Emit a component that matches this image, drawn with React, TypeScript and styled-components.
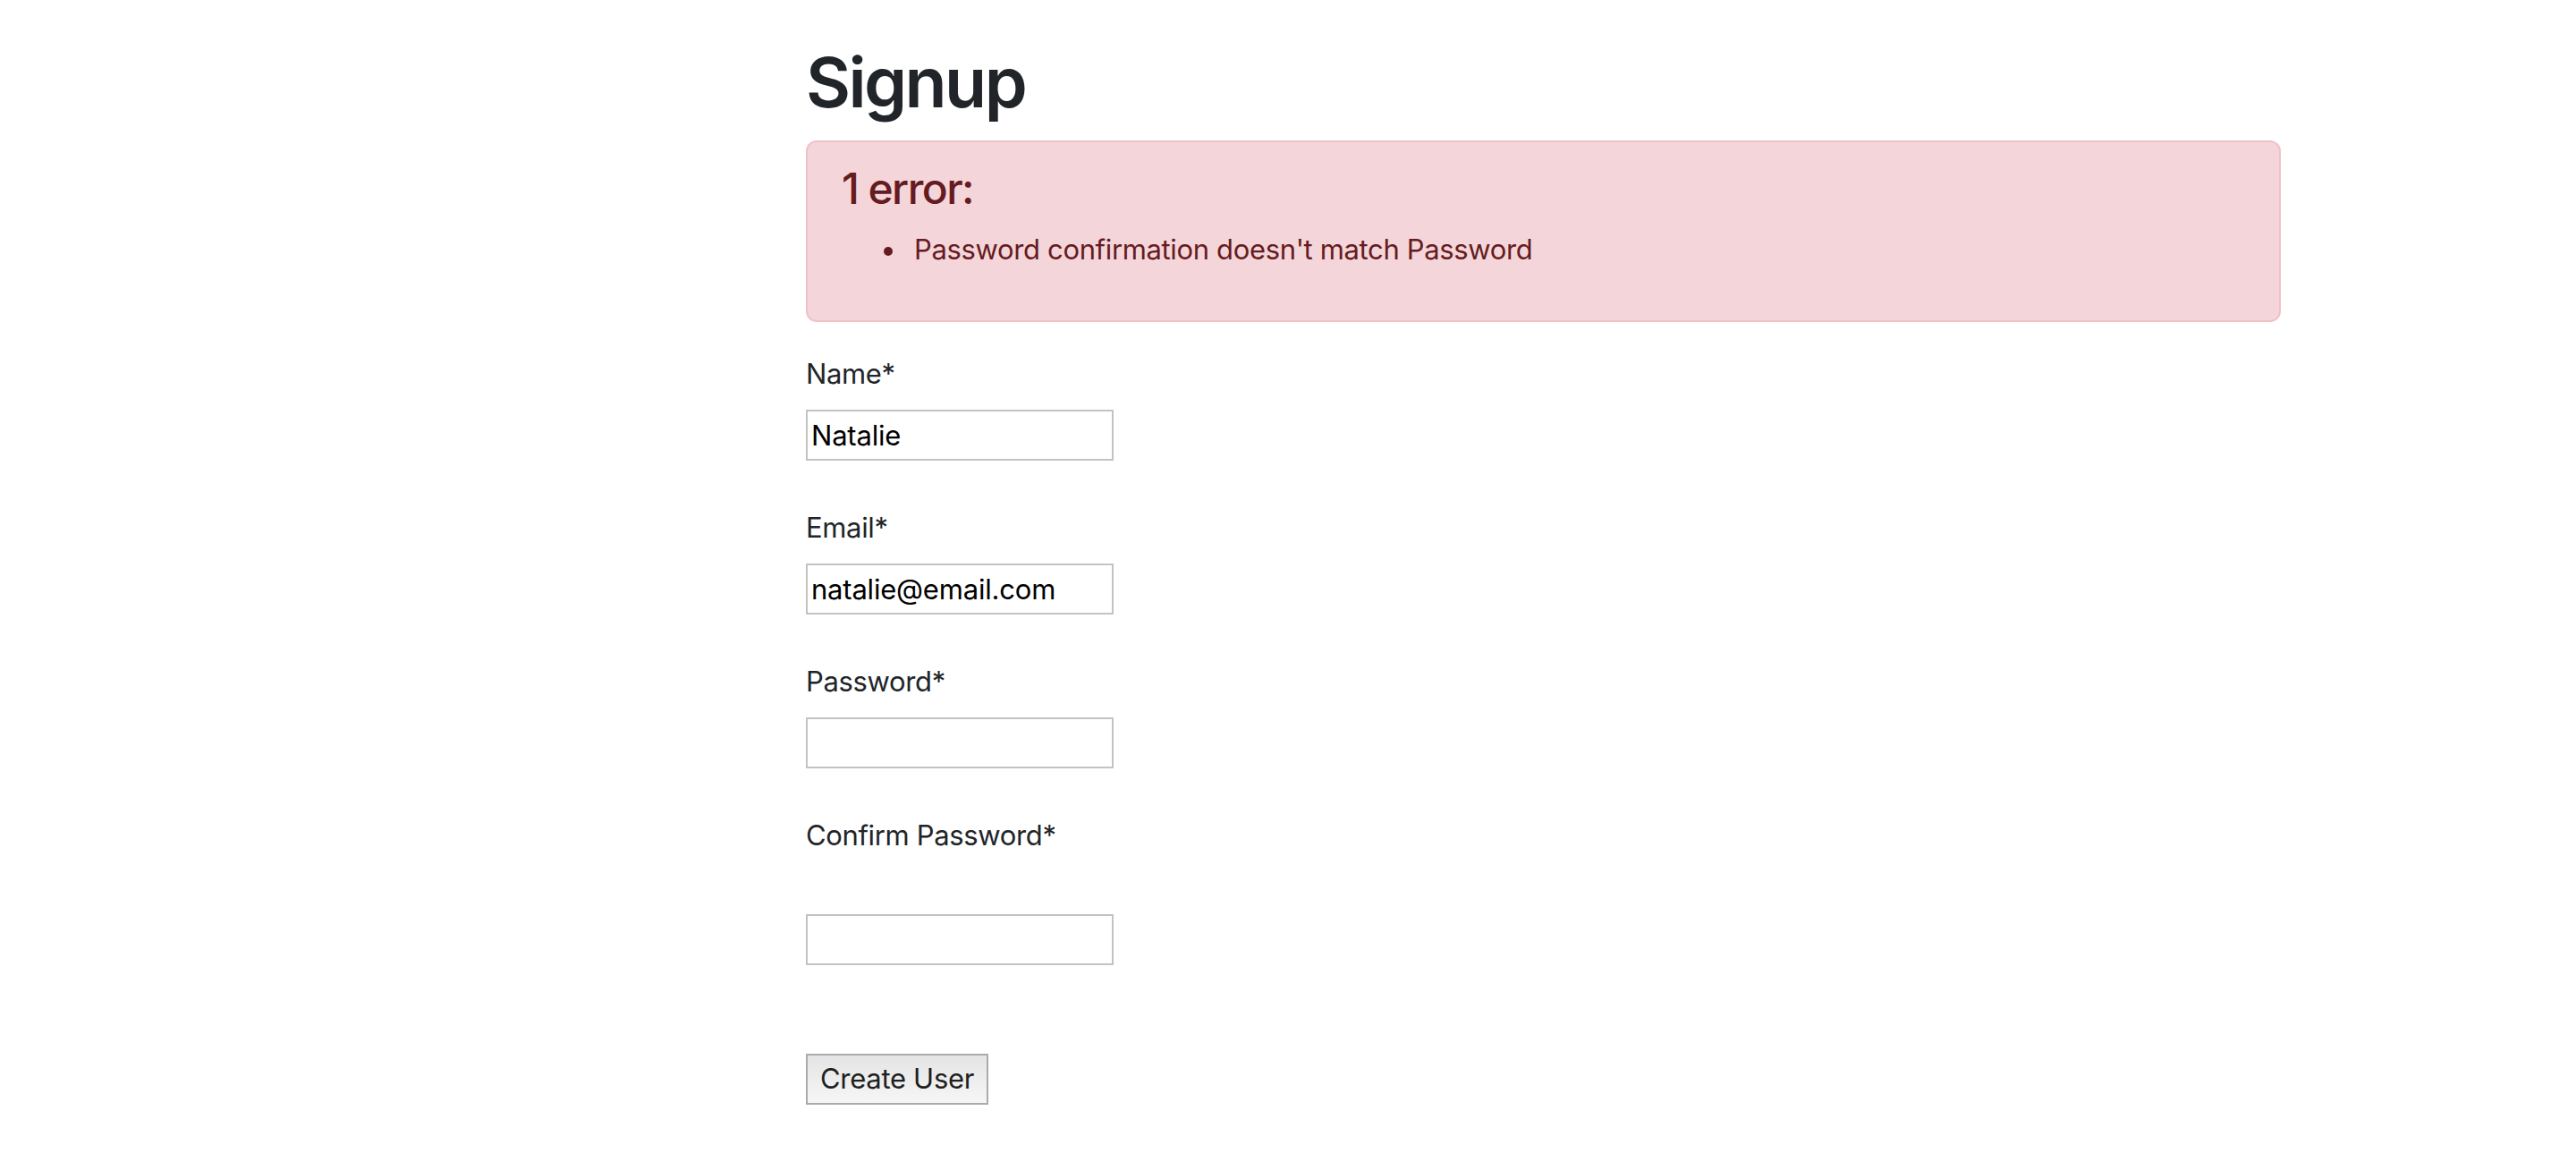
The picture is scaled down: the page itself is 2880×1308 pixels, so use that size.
import React from "react";
import styled, { createGlobalStyle } from "styled-components";

const GlobalStyle = createGlobalStyle`
  html, body {
    margin: 0;
    padding: 0;
    background: #ffffff;
  }
  body {
    font-family: Inter, "Noto Sans", "Liberation Sans", sans-serif;
    font-size: 31px;
    line-height: 1.5;
    letter-spacing: -0.35px;
    color: #212529;
  }
  * { box-sizing: border-box; }
`;

const Page = styled.main`
  padding: 44px 0 60px 901px;
`;

const Content = styled.div`
  width: 1649px;
`;

const Title = styled.h1`
  margin: 0 0 17px;
  font-size: 77px;
  line-height: 96px;
  font-weight: 600;
  letter-spacing: -2.6px;
  color: #212529;
`;

const Alert = styled.div`
  margin-bottom: 34px;
  padding: 23px 32px 24px;
  border: 2px solid #efc2c7;
  border-radius: 12px;
  background: #f4d6da;
  color: #661b21;
`;

const AlertHeading = styled.h4`
  margin: 0 0 15px;
  padding-left: 6px;
  font-size: 48px;
  line-height: 57.6px;
  font-weight: 500;
  letter-spacing: -1.6px;
`;

const ErrorList = styled.ul`
  margin: 0 0 31px;
  padding-left: 87px;
  list-style: none;
`;

const ErrorItem = styled.li`
  line-height: 48px;

  &::before {
    content: "";
    display: inline-block;
    width: 10px;
    height: 10px;
    margin-left: -34px;
    margin-right: 24px;
    border-radius: 50%;
    background: currentColor;
    vertical-align: middle;
  }
`;

const Form = styled.form`
  display: flex;
  flex-direction: column;
  align-items: flex-start;
`;

const Field = styled.div<{ $spacer?: boolean }>`
  display: flex;
  flex-direction: column;
  align-items: flex-start;
  margin-bottom: ${(p) => (p.$spacer ? "99px" : "51px")};
`;

const Label = styled.label<{ $extraLine?: boolean }>`
  display: block;
  margin-bottom: ${(p) => (p.$extraLine ? "64px" : "16px")};
  line-height: 48px;
  color: #212529;
`;

const TextInput = styled.input`
  width: 344px;
  height: 57px;
  margin: 0;
  padding: 0 4px;
  border: 2px solid #c3c3c3;
  border-radius: 0;
  background: #ffffff;
  font-family: inherit;
  font-size: 31px;
  letter-spacing: -0.2px;
  line-height: 48px;
  color: #000000;
  outline: none;
`;

const SubmitButton = styled.button`
  height: 57px;
  margin: 0;
  padding: 0 14px;
  border: 2px solid #ababab;
  border-radius: 0;
  background: linear-gradient(#e4e4e4, #f6f6f6);
  font-family: inherit;
  font-size: 31px;
  letter-spacing: -0.3px;
  line-height: 48px;
  color: #1f1f1f;
  cursor: pointer;
`;

export default function App() {
  return (
    <>
      <GlobalStyle />
      <Page>
        <Content>
          <Title>Signup</Title>
          <Alert>
            <AlertHeading>1 error:</AlertHeading>
            <ErrorList>
              <ErrorItem>Password confirmation doesn't match Password</ErrorItem>
            </ErrorList>
          </Alert>
          <Form onSubmit={(e) => e.preventDefault()}>
            <Field>
              <Label htmlFor="name">Name*</Label>
              <TextInput id="name" type="text" defaultValue="Natalie" />
            </Field>
            <Field>
              <Label htmlFor="email">Email*</Label>
              <TextInput id="email" type="email" defaultValue="natalie@email.com" />
            </Field>
            <Field>
              <Label htmlFor="password">Password*</Label>
              <TextInput id="password" type="password" />
            </Field>
            <Field $spacer>
              <Label htmlFor="password_confirmation" $extraLine>
                Confirm Password*
              </Label>
              <TextInput id="password_confirmation" type="password" />
            </Field>
            <SubmitButton type="submit">Create User</SubmitButton>
          </Form>
        </Content>
      </Page>
    </>
  );
}
